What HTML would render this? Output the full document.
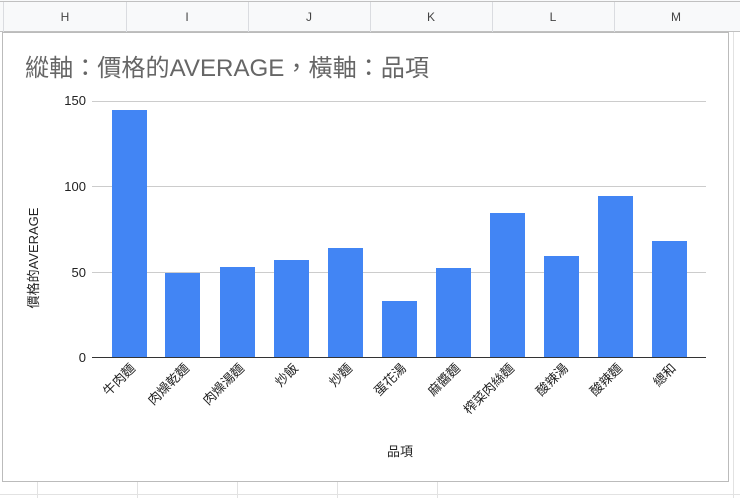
<!DOCTYPE html>
<html><head><meta charset="utf-8"><style>
body{margin:0;width:740px;height:498px;overflow:hidden;background:#fff;font-family:"Liberation Sans","Noto Sans CJK TC",sans-serif;}
</style></head><body>
<svg width="740" height="498" xmlns="http://www.w3.org/2000/svg" font-family="Liberation Sans, Noto Sans CJK TC, sans-serif">
<rect x="0" y="0" width="740" height="32" fill="#f8f9fa"/>
<line x1="0" y1="1.5" x2="740" y2="1.5" stroke="#c0c0c0"/>
<line x1="0" y1="31.5" x2="740" y2="31.5" stroke="#c0c0c0"/>
<g stroke="#dadce0"><line x1="3.5" y1="2" x2="3.5" y2="32"/><line x1="126.5" y1="2" x2="126.5" y2="32"/><line x1="248.5" y1="2" x2="248.5" y2="32"/><line x1="370.5" y1="2" x2="370.5" y2="32"/><line x1="492.5" y1="2" x2="492.5" y2="32"/><line x1="614.5" y1="2" x2="614.5" y2="32"/></g>
<g font-size="12" fill="#444" text-anchor="middle"><text x="65" y="21">H</text><text x="187" y="21">I</text><text x="309" y="21">J</text><text x="431" y="21">K</text><text x="553" y="21">L</text><text x="676" y="21">M</text></g>
<g stroke="#e2e2e2"><line x1="0" y1="494.5" x2="740" y2="494.5"/><line x1="37.5" y1="482" x2="37.5" y2="498"/><line x1="137.5" y1="482" x2="137.5" y2="498"/><line x1="237.5" y1="482" x2="237.5" y2="498"/><line x1="337.5" y1="482" x2="337.5" y2="498"/><line x1="437.5" y1="482" x2="437.5" y2="498"/><line x1="733.5" y1="32" x2="733.5" y2="498"/></g>
<rect x="2.5" y="32.5" width="726" height="449" fill="#fff" stroke="#bbb"/>
<text x="25" y="76" font-size="24" fill="#666" textLength="404" lengthAdjust="spacingAndGlyphs">縱軸：價格的AVERAGE，橫軸：品項</text>
<g stroke="#ccc"><line x1="92" y1="101.5" x2="706" y2="101.5"/><line x1="92" y1="186.5" x2="706" y2="186.5"/><line x1="92" y1="272.5" x2="706" y2="272.5"/></g>
<g font-size="13" fill="#222" text-anchor="end"><text x="86" y="105">150</text><text x="86" y="191">100</text><text x="86" y="277">50</text><text x="86" y="362">0</text></g>
<g fill="#4285f4">
<rect x="112" y="110" width="35" height="247"/>
<rect x="165" y="273" width="35" height="84"/>
<rect x="220" y="267" width="35" height="90"/>
<rect x="274" y="260" width="35" height="97"/>
<rect x="328" y="248" width="35" height="109"/>
<rect x="382" y="301" width="35" height="56"/>
<rect x="436" y="268" width="35" height="89"/>
<rect x="490" y="213" width="35" height="144"/>
<rect x="544" y="256" width="35" height="101"/>
<rect x="598" y="196" width="35" height="161"/>
<rect x="652" y="241" width="35" height="116"/>
</g>
<line x1="92" y1="357.5" x2="706" y2="357.5" stroke="#333"/>
<g font-size="13" fill="#222" text-anchor="end">
<text transform="translate(136,369) rotate(-45)">牛肉麵</text>
<text transform="translate(190,369) rotate(-45)">肉燥乾麵</text>
<text transform="translate(245,369) rotate(-45)">肉燥湯麵</text>
<text transform="translate(299,369) rotate(-45)">炒飯</text>
<text transform="translate(353,369) rotate(-45)">炒麵</text>
<text transform="translate(407,369) rotate(-45)">蛋花湯</text>
<text transform="translate(461,369) rotate(-45)">麻醬麵</text>
<text transform="translate(515,369) rotate(-45)">榨菜肉絲麵</text>
<text transform="translate(569,369) rotate(-45)">酸辣湯</text>
<text transform="translate(623,369) rotate(-45)">酸辣麵</text>
<text transform="translate(677,369) rotate(-45)">總和</text>
</g>
<text x="400" y="456" font-size="13" fill="#222" text-anchor="middle">品項</text>
<text transform="translate(38,258) rotate(-90)" font-size="13" fill="#222" text-anchor="middle">價格的AVERAGE</text>
</svg>
</body></html>
